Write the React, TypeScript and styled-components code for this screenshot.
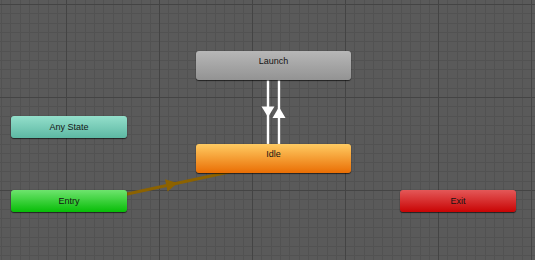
import { createGlobalStyle, styled } from "styled-components";

/** 상태 노드 색상 */
type Tone = "gray" | "teal" | "orange" | "green" | "red";

const tones: Record<Tone, [string, string]> = {
  gray: ["#b7b7b7", "#939393"],
  teal: ["#94dfcb", "#5db8a3"],
  orange: ["#ffcb62", "#ea6e04"],
  green: ["#6ee46e", "#07bd07"],
  red: ["#e45858", "#c90404"],
};

interface StateNode {
  id: string;
  label: string;
  tone: Tone;
  x: number;
  y: number;
  w: number;
  h: number;
}

const nodes: StateNode[] = [
  { id: "launch", label: "Launch", tone: "gray", x: 196, y: 51, w: 155, h: 29 },
  { id: "any", label: "Any State", tone: "teal", x: 11, y: 116, w: 116, h: 22 },
  { id: "idle", label: "Idle", tone: "orange", x: 196, y: 144, w: 155, h: 29 },
  { id: "entry", label: "Entry", tone: "green", x: 11, y: 190, w: 116, h: 22 },
  { id: "exit", label: "Exit", tone: "red", x: 400, y: 190, w: 116, h: 22 },
];

const App = (): JSX.Element => {
  return (
    <>
      <GlobalS />
      <CanvasS>
        <Transitions />
        {nodes.map((node) => (
          <NodeS
            key={node.id}
            $tone={node.tone}
            style={{ left: node.x, top: node.y, width: node.w, height: node.h }}
          >
            <NodeLabelS $tall={node.h > 25}>{node.label}</NodeLabelS>
          </NodeS>
        ))}
      </CanvasS>
    </>
  );
};

export default App;

/** 전이 화살표 */
const Transitions = (): JSX.Element => {
  return (
    <TransitionSvgS width={535} height={260} viewBox="0 0 535 260">
      {/* Entry -> Idle */}
      <line x1={118} y1={196} x2={250} y2={167.5} stroke="#8c6200" strokeWidth={3} />
      <polygon points="177.5,183 165,179.2 167.6,191.6" fill="#8c6200" />

      {/* Launch -> Idle */}
      <line x1={268} y1={78} x2={268} y2={146} stroke="#ffffff" strokeWidth={2.4} />
      <polygon points="261.5,106.5 274.5,106.5 268,117" fill="#ffffff" />

      {/* Idle -> Launch */}
      <line x1={279} y1={78} x2={279} y2={146} stroke="#ffffff" strokeWidth={2.4} />
      <polygon points="272.5,118 285.5,118 279,107" fill="#ffffff" />
    </TransitionSvgS>
  );
};

const GlobalS = createGlobalStyle`
  html, body {
    margin: 0;
    padding: 0;
    background: #5a5a5a;
  }
`;

/** 애니메이터 그리드 캔버스 */
const CanvasS = styled.div`
  position: relative;
  width: 535px;
  height: 260px;
  overflow: hidden;
  font-family: "Liberation Sans", Arial, sans-serif;

  background-color: #5a5a5a;
  background-image:
    repeating-linear-gradient(to right, #444444 0 1px, transparent 1px 93px),
    repeating-linear-gradient(to bottom, #444444 0 1px, transparent 1px 93px),
    repeating-linear-gradient(to right, #525252 0 1px, transparent 1px 9.3px),
    repeating-linear-gradient(to bottom, #525252 0 1px, transparent 1px 9.3px);
  background-position: 66px 4px, 66px 4px, 1px 4px, 1px 4px;
`;

const TransitionSvgS = styled.svg`
  position: absolute;
  left: 0;
  top: 0;
`;

/** 상태 박스 */
const NodeS = styled.div<{ $tone: Tone }>`
  position: absolute;
  box-sizing: border-box;
  border-radius: 3px;
  background: linear-gradient(
    to bottom,
    ${(p) => tones[p.$tone][0]},
    ${(p) => tones[p.$tone][1]}
  );
  box-shadow: 0 1px 1px rgba(0, 0, 0, 0.6), 0 0 1px rgba(0, 0, 0, 0.5);
  text-align: center;
`;

const NodeLabelS = styled.div<{ $tall: boolean }>`
  font-size: 9px;
  color: #141414;
  line-height: ${(p) => (p.$tall ? "20px" : "22px")};
`;
